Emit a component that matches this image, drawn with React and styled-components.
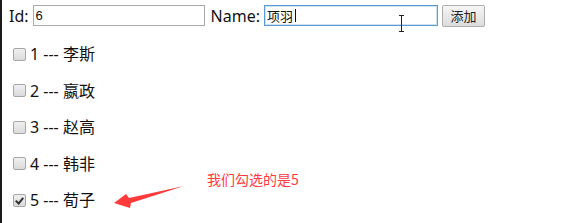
import React from 'react';
import styled, { createGlobalStyle } from 'styled-components';

const GlobalStyle = createGlobalStyle`
  html, body {
    margin: 0;
    padding: 0;
    background: #fff;
  }
  body {
    font-family: "Noto Sans", "Noto Sans CJK SC", sans-serif;
    color: #111;
  }
`;

const Page = styled.div`
  position: relative;
  height: 223px;
  border-left: 2px solid #1a1a1a;
  padding: 4px 0 0 7px;
  box-sizing: border-box;
  overflow: hidden;
`;

const Form = styled.div`
  display: flex;
  align-items: center;
  height: 23px;
  font-size: 16px;
`;

const Label = styled.span`
  margin-right: 4px;
  line-height: 20px;
  margin-left: ${(p) => (p.gap ? '6px' : '0')};
`;

const TextInput = styled.input`
  box-sizing: border-box;
  width: ${(p) => p.w}px;
  height: 21px;
  padding: 1px 2px;
  border: 1px solid ${(p) => (p.focused ? '#5b9bd5' : '#a9a9a9')};
  box-shadow: ${(p) => (p.focused ? 'inset 0 0 0 1px #cfe2f3' : 'none')};
  font-family: "Liberation Sans", "Noto Sans CJK SC", sans-serif;
  font-size: 13px;
  color: #111;
  outline: none;
`;

const Button = styled.button`
  box-sizing: border-box;
  margin-left: 4px;
  height: 22px;
  width: 43px;
  padding: 0;
  border: 1px solid #adadad;
  border-radius: 2px;
  background: linear-gradient(#f6f6f6, #dcdcdc);
  font-family: "Noto Sans CJK SC", sans-serif;
  font-size: 13px;
  color: #222;
`;

const List = styled.div`
  display: flex;
  flex-direction: column;
  gap: 16.5px;
  margin-top: 17px;
`;

const Row = styled.label`
  display: flex;
  align-items: center;
  height: 20px;
  font-size: 16px;
  line-height: 20px;
`;

const Check = styled.input`
  appearance: none;
  box-sizing: border-box;
  position: relative;
  width: 13px;
  height: 13px;
  margin: 0 4px 0 4px;
  border: 1px solid #a6a6a6;
  border-radius: 2px;
  background: linear-gradient(#f0f0f0, #dadada);

  &:checked::after {
    content: '';
    position: absolute;
    left: 3px;
    top: 1px;
    width: 3px;
    height: 6px;
    border: solid #333;
    border-width: 0 2px 2px 0;
    transform: rotate(40deg);
  }
`;

const Overlay = styled.svg`
  position: absolute;
  left: 0;
  top: 0;
  pointer-events: none;
`;

const Note = styled.span`
  position: absolute;
  left: 205px;
  top: 170px;
  font-family: "Noto Sans CJK SC", sans-serif;
  font-size: 14px;
  line-height: 18px;
  color: #ff3b3b;
`;

const people = [
  { id: 1, name: '李斯', checked: false },
  { id: 2, name: '嬴政', checked: false },
  { id: 3, name: '赵高', checked: false },
  { id: 4, name: '韩非', checked: false },
  { id: 5, name: '荀子', checked: true },
];

export default function App() {
  return (
    <Page>
      <GlobalStyle />
      <Form>
        <Label>Id:</Label>
        <TextInput w={172} defaultValue="6" />
        <Label gap>Name:</Label>
        <TextInput w={174} focused defaultValue="项羽" />
        <Button>添加</Button>
      </Form>
      <List>
        {people.map((p) => (
          <Row key={p.id}>
            <Check type="checkbox" defaultChecked={p.checked} />
            {p.id} --- {p.name}
          </Row>
        ))}
      </List>
      <Overlay width="579" height="223" viewBox="0 0 579 223">
        <path d="M112 203 L124 194 L127 198 L182 186 L129 203 L128 208 Z" fill="#ff3b3b" />
        <path d="M293.5 9 V22" stroke="#111" strokeWidth="1" />
        <g stroke="#222" strokeWidth="1" fill="none">
          <path d="M399.5 16 V31" />
          <path d="M397 15.5 H402 M397 31.5 H402" />
        </g>
      </Overlay>
      <Note>我们勾选的是5</Note>
    </Page>
  );
}
